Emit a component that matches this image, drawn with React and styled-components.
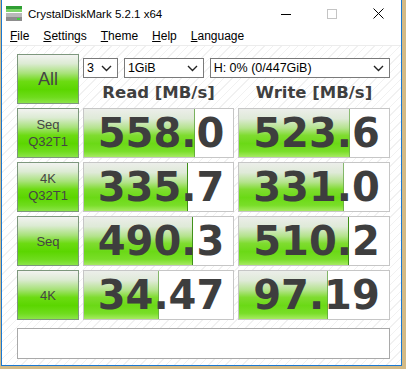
import React from "react";
import styled, { createGlobalStyle } from "styled-components";

const GlobalStyle = createGlobalStyle`
  body {
    margin: 0;
    background: #d3ba86;
    font-family: "Liberation Sans", Arial, sans-serif;
  }
`;

const Window = styled.div`
  width: 401px;
  height: 366px;
  margin-left: 1px;
  box-sizing: border-box;
  border: 1px solid #1b78d0;
  border-top: none;
  background: #fff;
  display: flex;
  flex-direction: column;
`;

const TitleBar = styled.div`
  height: 27px;
  display: flex;
  align-items: center;
  padding-left: 4px;
  .title {
    margin-left: 6px;
    font-size: 11.5px;
    color: #000;
    flex: 1;
  }
`;

const Control = styled.div`
  width: 46px;
  height: 27px;
  display: flex;
  align-items: center;
  justify-content: center;
`;

const MenuBar = styled.div`
  height: 18px;
  display: flex;
  align-items: center;
  padding-left: 1px;
  border-bottom: 1px solid #ececec;
  font-size: 12px;
  color: #000;
  span {
    padding: 0 7px;
  }
`;

const Content = styled.div`
  flex: 1;
  padding: 8px 0 0 15px;
  background: repeating-linear-gradient(
    135deg,
    #ffffff 0px,
    #ffffff 5px,
    #f1f1f1 5px,
    #f1f1f1 6px
  );
`;

const Grid = styled.div`
  display: grid;
  grid-template-columns: 62px 151px 152px;
  grid-auto-rows: 50px;
  gap: 4px;
`;

const LabelButton = styled.div`
  box-sizing: border-box;
  border: 1px solid #7d977d;
  background: linear-gradient(
    to bottom,
    #f2f3f1 0%,
    #dcebd3 18%,
    #a8e27a 38%,
    #6cdb12 55%,
    #5bd600 72%,
    #6edc1c 88%,
    #8be448 100%
  );
  display: flex;
  flex-direction: column;
  align-items: center;
  justify-content: center;
`;

const LabelText = styled.span`
  color: #454545;
  font-family: "Liberation Sans", Arial, sans-serif;
  font-size: ${(p) => (p.$big ? "18px" : "13px")};
  line-height: ${(p) => (p.$big ? "20px" : "17px")};
`;

const TopRight = styled.div`
  grid-column: 2 / 4;
  display: flex;
  flex-direction: column;
`;

const DropRow = styled.div`
  display: flex;
  gap: 6px;
  margin-top: 4px;
  height: 20px;
`;

const Select = styled.div`
  width: ${(p) => p.$w}px;
  box-sizing: border-box;
  border: 1px solid #7a7a7a;
  background: #fff;
  display: flex;
  align-items: center;
  justify-content: space-between;
  padding: 0 5px 0 3px;
  font-size: 12.5px;
  color: #000;
`;

const HeaderRow = styled.div`
  display: grid;
  grid-template-columns: 151px 152px;
  gap: 4px;
  flex: 1;
  align-items: center;
  font-family: "DejaVu Sans", Verdana, sans-serif;
  font-weight: bold;
  font-size: 16.5px;
  color: #3f3f3f;
  text-align: center;
  padding-top: 3px;
`;

const ValueCell = styled.div`
  box-sizing: border-box;
  border: 1px solid #c6c6c6;
  background-color: #fff;
  background-image: linear-gradient(
      to right,
      transparent calc(100% - 1px),
      #3d8f16 calc(100% - 1px)
    ),
    linear-gradient(
      to bottom,
      #eceeea 0%,
      #dfead8 20%,
      #b4e38c 40%,
      #7fdc30 55%,
      #6bd916 72%,
      #79de28 88%,
      #a6ea62 100%
    );
  background-repeat: no-repeat;
  display: flex;
  align-items: center;
  justify-content: center;
  padding-left: 5px;
  font-family: "DejaVu Sans", Verdana, sans-serif;
  font-weight: bold;
  font-size: 40px;
  color: #3e3e3e;
`;

const StatusBar = styled.div`
  width: 373px;
  height: 31px;
  box-sizing: border-box;
  margin-top: 8px;
  border: 1px solid #a9a9a9;
  background: #fff;
`;

const Chevron = () => (
  <svg width="11" height="7" viewBox="0 0 11 7">
    <polyline points="1,1 5.5,5.5 10,1" fill="none" stroke="#222" strokeWidth="1.4" />
  </svg>
);

const AppIcon = () => (
  <svg width="16" height="15" viewBox="0 0 16 15">
    <rect x="0" y="0" width="16" height="3" fill="#2f9e34" />
    <rect x="0" y="3" width="16" height="3" fill="#7dd46a" />
    <rect x="0" y="7" width="16" height="4" fill="#b9b9b9" />
    <rect x="0" y="11" width="16" height="4" fill="#8d8d8d" />
    <rect x="11" y="12" width="3" height="2" fill="#3fd040" />
  </svg>
);

const rows = [
  { label: ["Seq", "Q32T1"], read: "558.0", write: "523.6" },
  { label: ["4K", "Q32T1"], read: "335.7", write: "331.0" },
  { label: ["Seq"], read: "490.3", write: "510.2" },
  { label: ["4K"], read: "34.47", write: "97.19" },
];

// bar length on a log scale, as the app draws it
const fill = (v) => {
  const pct = ((29 + 30 * Math.log10(parseFloat(v))) / 150) * 100;
  return { backgroundSize: `${pct}% 100%, ${pct}% 100%` };
};

const App = () => {
  return (
    <Window>
      <GlobalStyle />
      <TitleBar>
        <AppIcon />
        <span className="title">CrystalDiskMark 5.2.1 x64</span>
        <Control>
          <svg width="10" height="10" viewBox="0 0 10 10">
            <line x1="0" y1="5.5" x2="10" y2="5.5" stroke="#000" strokeWidth="1" />
          </svg>
        </Control>
        <Control>
          <svg width="10" height="10" viewBox="0 0 10 10">
            <rect x="0.5" y="0.5" width="9" height="9" fill="none" stroke="#c4c4c4" strokeWidth="1" />
          </svg>
        </Control>
        <Control>
          <svg width="11" height="11" viewBox="0 0 11 11">
            <line x1="0.5" y1="0.5" x2="10.5" y2="10.5" stroke="#000" strokeWidth="1" />
            <line x1="10.5" y1="0.5" x2="0.5" y2="10.5" stroke="#000" strokeWidth="1" />
          </svg>
        </Control>
      </TitleBar>
      <MenuBar>
        <span><u>F</u>ile</span>
        <span><u>S</u>ettings</span>
        <span><u>T</u>heme</span>
        <span><u>H</u>elp</span>
        <span><u>L</u>anguage</span>
      </MenuBar>
      <Content>
        <Grid>
          <LabelButton>
            <LabelText $big>All</LabelText>
          </LabelButton>
          <TopRight>
            <DropRow>
              <Select $w={35}>3<Chevron /></Select>
              <Select $w={80}>1GiB<Chevron /></Select>
              <Select $w={181}>H: 0% (0/447GiB)<Chevron /></Select>
            </DropRow>
            <HeaderRow>
              <span>Read [MB/s]</span>
              <span>Write [MB/s]</span>
            </HeaderRow>
          </TopRight>
          {rows.map((r) => (
            <React.Fragment key={r.label.join("")}>
              <LabelButton>
                {r.label.map((l) => (
                  <LabelText key={l}>{l}</LabelText>
                ))}
              </LabelButton>
              <ValueCell style={fill(r.read)}>{r.read}</ValueCell>
              <ValueCell style={fill(r.write)}>{r.write}</ValueCell>
            </React.Fragment>
          ))}
        </Grid>
        <StatusBar />
      </Content>
    </Window>
  );
};

export default App;
